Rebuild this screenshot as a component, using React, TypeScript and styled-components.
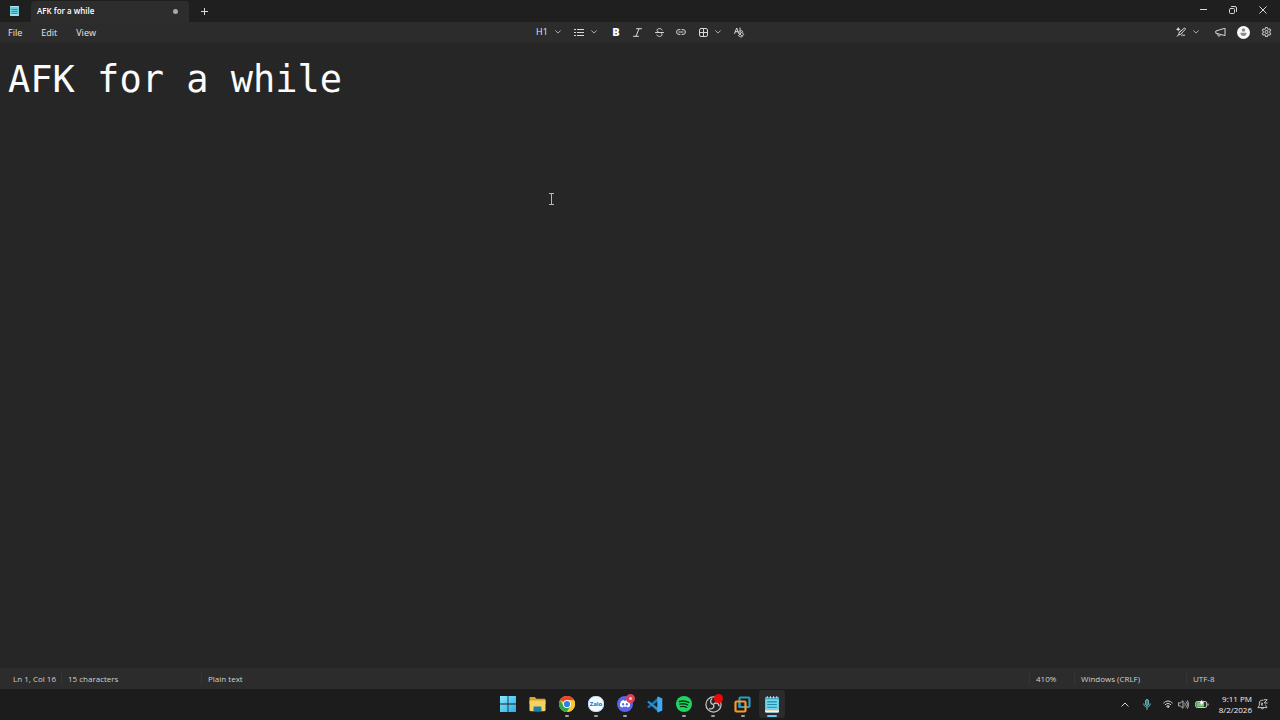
import React from "react";
import styled, { createGlobalStyle } from "styled-components";

const Global = createGlobalStyle`
  * { box-sizing: border-box; }
  body { margin: 0; background: #262626; overflow: hidden; }
  button, textarea { font: inherit; color: inherit; background: none; border: 0; padding: 0; margin: 0; }
  svg { display: block; }
`;

const Desktop = styled.div`
  position: relative;
  display: flex;
  flex-direction: column;
  min-height: 100vh;
  font-family: "Open Sans", "Noto Sans", sans-serif;
  font-size: 9px;
  line-height: 12px;
  color: #e8e8e8;
`;

const TitleBar = styled.header`
  display: flex;
  align-items: stretch;
  height: 22px;
  background: #1f1f1f;
  > button { height: auto; }
`;

const AppIcon = styled.div`
  display: flex;
  align-items: center;
  justify-content: center;
  width: 31px;
  padding-right: 3px;
`;

const Tab = styled.button`
  display: flex;
  align-items: center;
  justify-content: space-between;
  width: 158px;
  margin-top: 1px;
  padding: 0 11px 1px 6px;
  border-radius: 4px 4px 0 0;
  background: #2d2d2d;
  font-size: 8px;
  font-weight: 600;
  color: #ffffff;
`;

const UnsavedDot = styled.span`
  width: 5px;
  height: 5px;
  border-radius: 50%;
  background: #a8a8a8;
`;

const IconButton = styled.button<{ $width?: number }>`
  display: flex;
  align-items: center;
  justify-content: center;
  width: ${(p) => p.$width ?? 22}px;
  height: 20px;
`;

const WindowControls = styled.div`
  display: flex;
  margin-left: auto;
  height: 19px;
  padding-right: 2px;
  button { height: 19px; }
`;

const CommandBar = styled.div`
  display: grid;
  grid-template-columns: 1fr auto 1fr;
  align-items: center;
  height: 21px;
  background: #2c2c2c;
  border-bottom: 1px solid #292929;
`;

const Menus = styled.nav`
  display: flex;
  gap: 19px;
  padding: 2px 0 0 8px;
`;

const MenuButton = styled.button`
  height: 18px;
`;

const FormatTools = styled.div`
  display: flex;
  align-items: center;
  padding-left: 8px;
`;

const DropButton = styled.button<{ $width: number }>`
  display: flex;
  align-items: center;
  gap: 7px;
  width: ${(p) => p.$width}px;
  height: 20px;
`;

const BoldGlyph = styled.b`
  font-family: "Open Sans", sans-serif;
  font-size: 11px;
  font-weight: 800;
  color: #ffffff;
`;

const BarActions = styled.div`
  display: flex;
  align-items: center;
  justify-content: flex-end;
  padding-right: 3px;
`;

const Avatar = styled.span`
  display: flex;
  align-items: center;
  justify-content: center;
  width: 13px;
  height: 13px;
  border-radius: 50%;
  background: #fafafa;
`;

const Editor = styled.textarea`
  flex: 1;
  width: 100%;
  padding: 15px 8px;
  resize: none;
  outline: none;
  background: #262626;
  color: #fbfbfb;
  font-family: "DejaVu Sans Mono", monospace;
  font-size: 37px;
  line-height: 43px;
`;

const StatusBar = styled.footer`
  display: flex;
  align-items: center;
  height: 21px;
  background: #2c2c2c;
  font-size: 8px;
  color: #d0d0d0;
`;

const StatusCell = styled.span<{ $width?: number; $first?: boolean }>`
  width: ${(p) => (p.$width ? `${p.$width}px` : "auto")};
  flex: ${(p) => (p.$width ? "none" : "1")};
  padding-top: 1px;
  padding-left: ${(p) => (p.$first ? 13 : 6)}px;
  border-left: ${(p) => (p.$first ? "0" : "1px solid #353535")};
  white-space: nowrap;
`;

const Taskbar = styled.footer`
  display: grid;
  grid-template-columns: 1fr 290px 1fr;
  align-items: start;
  height: 31px;
  padding-top: 1px;
  background: #1c1c1c;
`;

const Apps = styled.nav`
  grid-column: 2;
  display: flex;
  justify-content: space-between;
`;

const TaskButton = styled.button<{ $active?: boolean }>`
  position: relative;
  display: flex;
  align-items: center;
  justify-content: center;
  width: 26px;
  height: 28px;
  border-radius: 3px;
  background: ${(p) => (p.$active ? "#2b2b2b" : "transparent")};
`;

const RunMark = styled.span<{ $active?: boolean }>`
  position: absolute;
  bottom: 1px;
  width: ${(p) => (p.$active ? 10 : 4)}px;
  height: 2px;
  border-radius: 1px;
  background: ${(p) => (p.$active ? "#62cdf4" : "#a0a0a0")};
`;

const Badge = styled.span<{ $ring?: boolean }>`
  position: absolute;
  top: 4px;
  right: 3px;
  width: 9px;
  height: 9px;
  border-radius: 50%;
  background: ${(p) => (p.$ring ? "#f4d5dc" : "#f00808")};
  border: ${(p) => (p.$ring ? "3px solid #df4158" : "0")};
`;

const Zalo = styled.span`
  display: flex;
  align-items: center;
  justify-content: center;
  width: 16px;
  height: 16px;
  border-radius: 7px;
  background: #f5faff;
  border: 1px solid #b9dcfa;
  color: #1769dc;
  font-size: 6px;
  line-height: 8px;
  font-weight: 700;
`;

const Tray = styled.div`
  display: flex;
  align-items: center;
  justify-content: flex-end;
  padding-right: 8px;
`;

const TrayButton = styled.button<{ $width: number }>`
  display: flex;
  align-items: center;
  justify-content: center;
  width: ${(p) => p.$width}px;
  height: 28px;
`;

const Clock = styled.button`
  width: 38px;
  text-align: right;
  font-size: 8px;
  line-height: 11px;
  color: #f0f0f0;
`;

const Pointer = styled.svg`
  position: absolute;
  left: 548px;
  top: 193px;
  pointer-events: none;
`;

const line = { fill: "none", stroke: "#d8d8d8", strokeWidth: 1, strokeLinecap: "round", strokeLinejoin: "round" } as const;

const Chevron = () => (
  <svg width="6" height="4" viewBox="0 0 6 4" {...line} stroke="#b0b0b0"><path d="M.6.7 3 3.1 5.4.7" /></svg>
);

const Notepad = ({ size }: { size: number }) => (
  <svg width={size} height={size} viewBox="0 0 16 16">
    <rect x="2" y="1" width="13" height="14.500" rx="1" fill="#72d6ec" />
    <path d="M2 1h13v2H2z" fill="#2f9fc0" />
    <path d="M4 .2v2M7 .2v2M10 .2v2M13 .2v2" stroke="#c9f2fb" strokeWidth="1" />
    <path d="M4 5.500h9M4 8h9M4 10.500h9" stroke="#2388a8" strokeWidth="1" />
    <path d="M2 13h13v1.500a1 1 0 0 1-1 1H3a1 1 0 0 1-1-1z" fill="#e9f7fa" />
    <path d="M2 13h13" stroke="#f0a05d" strokeWidth="1" />
  </svg>
);

const NotepadSmall = () => (
  <svg width="11" height="12" viewBox="0 0 11 12">
    <rect x="1" y="1" width="9" height="10" rx="1" fill="#6fcde2" />
    <path d="M1 1h9v1H1z" fill="#a7e6f2" />
    <path d="M2.500 4.500h6M2.500 6.500h6M2.500 8.500h6" stroke="#2a93b0" />
    <path d="M1 10h9" stroke="#d9eef2" />
  </svg>
);

const Windows = () => (
  <svg width="16" height="16" viewBox="0 0 16 16">
    <defs>
      <linearGradient id="win" x1="0" y1="0" x2="1" y2="1"><stop stopColor="#8be6fb" /><stop offset="1" stopColor="#25aeea" /></linearGradient>
    </defs>
    <path fill="url(#win)" d="M0 0h7.6v7.6H0zM8.4 0H16v7.6H8.4zM0 8.4h7.6V16H0zM8.4 8.4H16V16H8.4z" />
  </svg>
);

const Folder = () => (
  <svg width="17" height="16" viewBox="0 0 17 16">
    <path d="M.5 2.2c0-.7.4-1.2 1.2-1.2h4l1.8 1.8h7.8c.7 0 1.2.5 1.2 1.2V8H.5z" fill="#dba52a" />
    <path d="M.5 4.600h16V14c0 .7-.5 1.200-1.200 1.200H1.700C1 15.200.5 14.700.5 14z" fill="#f5d25e" />
    <path d="M4.500 15.200v-3.500c0-.7.5-1.200 1.200-1.200h5.600c.7 0 1.200.5 1.200 1.200v3.500z" fill="#1b7fae" />
  </svg>
);

const Chrome = () => (
  <svg width="16" height="16" viewBox="0 0 16 16">
    <circle cx="8" cy="8" r="8" fill="#fbc92d" />
    <path d="M8 8 1.070 4A8 8 0 0 1 14.930 4z" fill="#e84335" />
    <path d="M1.070 4A8 8 0 0 0 8 16l3.500-6L8 8 4.500 10z" fill="#2ea650" />
    <path d="M8 4h6.930A8 8 0 0 1 8 16l3.460-6z" fill="#fbc92d" />
    <circle cx="8" cy="8" r="4" fill="#fff" />
    <circle cx="8" cy="8" r="3.100" fill="#337fe8" />
  </svg>
);

const Discord = () => (
  <svg width="16" height="16" viewBox="0 0 16 16">
    <circle cx="8" cy="8" r="8" fill="#5865e8" />
    <path d="M4.300 4.900c1-.6 1.800-.8 2.300-.9l.4.7h2l.4-.7c.7.1 1.500.4 2.300.9 1.100 1.700 1.500 3.400 1.300 5.400-.8.6-1.700 1-2.500 1.200l-.6-1c-1.300.4-2.500.4-3.800 0l-.6 1c-.9-.2-1.700-.6-2.500-1.200-.2-2 .3-3.700 1.300-5.400z" fill="#fff" />
    <ellipse cx="6.100" cy="8.200" rx="1" ry="1.200" fill="#5865e8" /><ellipse cx="9.900" cy="8.200" rx="1" ry="1.200" fill="#5865e8" />
  </svg>
);

const Code = () => (
  <svg width="17" height="17" viewBox="0 0 17 17">
    <path d="m12.200 1.200-11 9.600 1.500 1.400 9.500-7.300z" fill="#1676b8" />
    <path d="m12.200 15.800-11-9.600 1.500-1.400 9.500 7.300z" fill="#2490d8" />
    <path d="m12 .500 4.300 2v12L12 16.500l-.7-.5V1z" fill="#42a9ee" />
  </svg>
);

const Spotify = () => (
  <svg width="16" height="16" viewBox="0 0 16 16">
    <circle cx="8" cy="8" r="8" fill="#1ed760" />
    <g fill="none" stroke="#102b19" strokeLinecap="round">
      <path d="M3.400 5.500c3.200-.9 6.500-.6 9.300.9" strokeWidth="1.500" />
      <path d="M3.900 8.200c2.700-.8 5.500-.5 7.900.8" strokeWidth="1.300" />
      <path d="M4.300 10.700c2.300-.6 4.500-.4 6.500.8" strokeWidth="1.100" />
    </g>
  </svg>
);

const Obs = () => (
  <svg width="17" height="17" viewBox="0 0 17 17">
    <circle cx="8.500" cy="8.500" r="7.600" fill="#242424" stroke="#c9c9c9" strokeWidth="1.200" />
    <g fill="none" stroke="#c9c9c9" strokeWidth="1.300">
      <path d="M8.500 8.500C5.200 8.200 4.600 4.600 7.200 2.600" />
      <path d="M8.500 8.500C5.200 8.200 4.600 4.600 7.200 2.600" transform="rotate(120 8.500 8.500)" />
      <path d="M8.500 8.500C5.200 8.200 4.600 4.600 7.200 2.600" transform="rotate(240 8.500 8.500)" />
    </g>
  </svg>
);

const VMware = () => (
  <svg width="17" height="17" viewBox="0 0 17 17" fill="none" strokeWidth="2.200">
    <rect x="5.500" y="1.500" width="10" height="9.500" rx="1" stroke="#2f9cc0" />
    <rect x="1.500" y="5.500" width="10" height="10" rx="1" stroke="#f29a2b" />
    <path d="M5.500 7V11H10" stroke="#2f9cc0" />
  </svg>
);

const apps = [
  { name: "Start", icon: <Windows /> },
  { name: "File Explorer", icon: <Folder /> },
  { name: "Chrome", icon: <Chrome />, running: true },
  { name: "Zalo", icon: <Zalo>Zalo</Zalo>, running: true },
  { name: "Discord", icon: <Discord />, running: true, badge: "ring" },
  { name: "Visual Studio Code", icon: <Code /> },
  { name: "Spotify", icon: <Spotify />, running: true },
  { name: "OBS Studio", icon: <Obs />, running: true, badge: "dot" },
  { name: "VMware", icon: <VMware />, running: true },
  { name: "Notepad", icon: <Notepad size={17} />, running: true, active: true },
];

export default function App() {
  return (
    <Desktop>
      <Global />
      <TitleBar>
        <AppIcon><NotepadSmall /></AppIcon>
        <Tab>AFK for a while<UnsavedDot /></Tab>
        <IconButton $width={31} aria-label="New tab">
          <svg width="7" height="7" viewBox="0 0 7 7" {...line} strokeLinecap="butt"><path d="M3.500 0v7M0 3.500h7" /></svg>
        </IconButton>
        <WindowControls>
          <IconButton $width={30} aria-label="Minimize">
            <svg width="7" height="7" viewBox="0 0 7 7" {...line} strokeLinecap="butt"><path d="M0 3.500h7" /></svg>
          </IconButton>
          <IconButton $width={30} aria-label="Restore">
            <svg width="8" height="8" viewBox="0 0 8 8" {...line}><rect x=".5" y="2.500" width="5" height="5" rx="1" /><path d="M2.500.5H6A1.500 1.500 0 0 1 7.500 2v3.500" /></svg>
          </IconButton>
          <IconButton $width={30} aria-label="Close">
            <svg width="8" height="8" viewBox="0 0 8 8" {...line}><path d="m.7.7 6.600 6.600M7.300.7.7 7.300" /></svg>
          </IconButton>
        </WindowControls>
      </TitleBar>

      <CommandBar>
        <Menus>
          <MenuButton>File</MenuButton>
          <MenuButton>Edit</MenuButton>
          <MenuButton>View</MenuButton>
        </Menus>
        <FormatTools>
          <DropButton $width={38} aria-label="Heading">H1<Chevron /></DropButton>
          <DropButton $width={32} aria-label="List">
            <svg width="10" height="8" viewBox="0 0 10 8" {...line} strokeLinecap="butt"><path d="M3 1.500h7M3 4.500h7M3 7.500h7M0 1.500h2M0 4.500h2M0 7.500h2" /></svg>
            <Chevron />
          </DropButton>
          <IconButton $width={20} aria-label="Bold"><BoldGlyph>B</BoldGlyph></IconButton>
          <IconButton aria-label="Italic">
            <svg width="9" height="9" viewBox="0 0 9 9" {...line}><path d="M3.500.7h5M.5 8.300h5M6 .7 3 8.300" /></svg>
          </IconButton>
          <IconButton aria-label="Strikethrough">
            <svg width="9" height="9" viewBox="0 0 9 9" {...line}><path d="M7 2C6.500 1 5.700.6 4.500.6 3 .6 2 1.300 2 2.400c0 1 .7 1.500 2.500 2.100M.5 4.500h8M6.500 5.200c1.400 1.400.3 3.200-2 3.200-1.300 0-2.300-.5-2.700-1.500" /></svg>
          </IconButton>
          <IconButton aria-label="Link">
            <svg width="10" height="6" viewBox="0 0 10 6" {...line}><path d="M4 .6H3a2.400 2.400 0 0 0 0 4.800h1M6 .6h1a2.400 2.400 0 0 1 0 4.800H6M3 3h4" /></svg>
          </IconButton>
          <DropButton $width={35} aria-label="Table">
            <svg width="16" height="9" viewBox="0 0 16 9" {...line}><rect x="7.500" y=".5" width="8" height="8" rx="1.500" /><path d="M11.500.5v8M7.500 4.500h8" /></svg>
            <Chevron />
          </DropButton>
          <IconButton $width={25} aria-label="Clear formatting">
            <svg width="11" height="11" viewBox="0 0 11 11" {...line}>
              <path d="M.6 6.500 2.700 1l2.100 5.500M1.300 4.700h2.800M6 1v5.500M6 4.300c.5-1.200 2.800-1 2.800.8" />
              <path d="m4.700 8.400 3-3 2.100 2.100-2.200 2.200c-.5.5-1.100.5-1.600 0z" /><path d="m6 7.100 2.100 2.100" />
            </svg>
          </IconButton>
        </FormatTools>
        <BarActions>
          <DropButton $width={33} aria-label="Writing tools">
            <svg width="10" height="10" viewBox="0 0 10 10" {...line}>
              <path d="M2.200 0 2.900 1.600 4.500 2.200 2.900 2.900 2.200 4.500 1.500 2.900 0 2.200 1.500 1.600z" fill="#e8e8e8" stroke="none" />
              <path d="M8.200 1.200c.8-.5 1.600.3 1.100 1.100L4.800 7.200l-2.300.8.800-2.200zM5.500 3.200 3.200 5.500M1 9.300l1.500-1.300M5.500 8.800c.9-1.800 1.500-1.800 1.600-.7.1.9.8.8 1.700 0" />
            </svg>
            <Chevron />
          </DropButton>
          <IconButton aria-label="Feedback">
            <svg width="11" height="9" viewBox="0 0 11 9" {...line}><path d="M10 .6v7L.8 5.200V3.400zM2.800 5.800v1.400c0 1.200 2.300 1.400 2.600 0" /></svg>
          </IconButton>
          <IconButton $width={24} aria-label="Account">
            <Avatar><svg width="7" height="8" viewBox="0 0 7 8" fill="#8b8b8b"><circle cx="3.500" cy="2" r="1.800" /><path d="M.5 4.700h6v.5C6.500 6.800 5.300 8 3.500 8S.5 6.800.5 5.200z" /></svg></Avatar>
          </IconButton>
          <IconButton aria-label="Settings">
            <svg width="11" height="11" viewBox="0 0 24 24" {...line} stroke="#c4c4c4" strokeWidth="2.200"><path d="m9.500 3 .7-1.900h3.600l.7 2.900 2 1.100 2.900-.9 1.800 3.100-2.200 2.200v2.600l2.200 2.400-1.800 3.100-3-.9-1.900 1.200-.7 3h-3.600l-.7-3-2-1.200-2.900.9-1.800-3.100L5 12.200V9.600L2.800 7.400l1.800-3.100 2.900.9 2-1.100z" /><circle cx="12" cy="11" r="3.200" /></svg>
          </IconButton>
        </BarActions>
      </CommandBar>

      <Editor aria-label="Document" spellCheck={false} defaultValue="AFK for a while" />

      <StatusBar>
        <StatusCell $first $width={61}>Ln 1, Col 16</StatusCell>
        <StatusCell $width={140}>15 characters</StatusCell>
        <StatusCell>Plain text</StatusCell>
        <StatusCell $width={45}>410%</StatusCell>
        <StatusCell $width={112}>Windows (CRLF)</StatusCell>
        <StatusCell $width={94}>UTF-8</StatusCell>
      </StatusBar>

      <Taskbar>
        <Apps>
          {apps.map((app) => (
            <TaskButton key={app.name} aria-label={app.name} $active={app.active}>
              {app.icon}
              {app.badge && <Badge $ring={app.badge === "ring"} />}
              {app.running && <RunMark $active={app.active} />}
            </TaskButton>
          ))}
        </Apps>
        <Tray>
          <TrayButton $width={20} aria-label="Show hidden icons">
            <svg width="8" height="5" viewBox="0 0 8 5" {...line}><path d="m.8 4.200 3.200-3.200 3.200 3.200" /></svg>
          </TrayButton>
          <TrayButton $width={23} aria-label="Microphone">
            <svg width="8" height="11" viewBox="0 0 8 11" {...line} stroke="#68b5b3"><rect x="2.500" y=".5" width="3" height="6" rx="1.500" fill="#397d7e" /><path d="M.7 4.800c0 4.500 6.600 4.500 6.600 0M4 8.300v2.200" /></svg>
          </TrayButton>
          <TrayButton $width={19} aria-label="Network">
            <svg width="10" height="8" viewBox="0 0 10 8" {...line}><path d="M.7 3c2.500-2.700 6.100-2.700 8.600 0M2.200 4.700c1.700-1.700 3.900-1.700 5.600 0M3.700 6.200c.8-.7 1.800-.7 2.600 0" /><circle cx="5" cy="7" r=".5" /></svg>
          </TrayButton>
          <TrayButton $width={13} aria-label="Volume">
            <svg width="11" height="9" viewBox="0 0 11 9" {...line}><path d="M.6 3v3h1.700L5 8.200V.8L2.300 3zM6.700 3c.8.9.8 2.100 0 3M8.200 1.700c1.600 1.600 1.600 4 0 5.600M9.600.7c1.200 2.200 1.200 5.400 0 7.600" strokeWidth=".8" /></svg>
          </TrayButton>
          <TrayButton $width={24} aria-label="Battery">
            <svg width="14" height="10" viewBox="0 0 14 10"><rect x=".7" y="2.500" width="11" height="6" rx="1.500" fill="#303030" stroke="#bcd3bc" /><rect x="1.500" y="3.200" width="7.500" height="4.600" rx=".8" fill="#77c878" /><path d="M13 4.500v2" stroke="#cfcfcf" /><path d="M7.200.3 4.500 4.600h2L5.700 7l3.200-4H7z" fill="#fff" /></svg>
          </TrayButton>
          <Clock>9:11 PM<br />8/2/2026</Clock>
          <TrayButton $width={20} aria-label="Notifications">
            <svg width="11" height="11" viewBox="0 0 11 11" {...line}><path d="M6 1.200C3.600.8 2.300 2.300 2.300 4.200v2.300L.9 8.600h9L8.700 6.500V6M4.200 8.800c.2 1.600 2.200 1.600 2.500 0M7.200.7h3L7.200 4h3M4.200 4.200h1.500L4.200 6h1.500" strokeWidth=".9" /></svg>
          </TrayButton>
        </Tray>
      </Taskbar>

      <Pointer width="7" height="12" viewBox="0 0 7 12" fill="none" stroke="#b8b8b8"><path d="M1 .5h5M3.500.5v11M1 11.500h5" /></Pointer>
    </Desktop>
  );
}
